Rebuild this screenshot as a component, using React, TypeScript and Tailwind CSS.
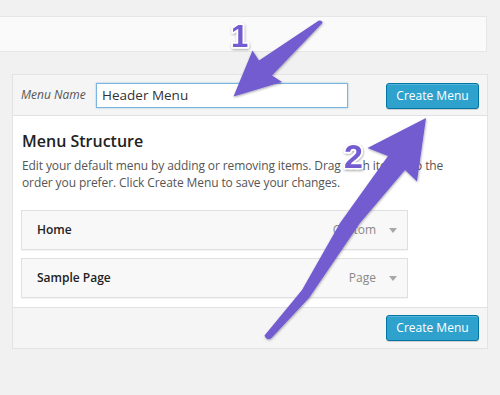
import React from "react";

function Arrows() {
  return (
    <svg
      className="absolute left-0 top-0 pointer-events-none"
      width={500}
      height={395}
      viewBox="0 0 500 395"
    >
      <defs>
        <filter id="sh" x="-20%" y="-20%" width="140%" height="140%">
          <feDropShadow dx="0.5" dy="1" stdDeviation="0.8" floodColor="#000" floodOpacity="0.35" />
        </filter>
      </defs>
      <g fill="#725bd0" filter="url(#sh)">
        <path d="M318.5,20.8 Q321.5,19.8 322.6,22.8 L272,75.5 L282,82 L233.5,96.5 L252.5,50.5 L259,60.5 Z" />
        <path d="M264.5,335.5 L302,290 L340,223 L388,156 L367.5,148 L426,118 L417,181.5 L405,170 L360,223 L309,298 L271.5,338 Q267,341.5 264.5,335.5 Z" />
      </g>
      <g
        fontFamily="'Liberation Sans', Arial, sans-serif"
        fontWeight="700"
        fill="#725bd0"
        stroke="#ffffff"
        strokeWidth="3.5"
        strokeLinejoin="round"
        paintOrder="stroke"
        textAnchor="middle"
        filter="url(#sh)"
      >
        <text x="239.5" y="46.5" fontSize="31">1</text>
        <text x="353.5" y="167.5" fontSize="34">2</text>
      </g>
    </svg>
  );
}

function Button() {
  return (
    <button className="w-[93px] h-[26px] rounded-[3px] bg-[#2ea2cc] border border-[#0074a2] text-white text-[12px] leading-none shadow-[inset_0_1px_0_rgba(120,200,230,0.5),0_1px_0_rgba(0,0,0,0.15)]">
      Create Menu
    </button>
  );
}

function Item({ title, type }: { title: string; type: string }) {
  return (
    <div className="w-[387px] h-[40px] border border-[#dfdfdf] bg-[#f8f8f8] flex items-center pl-[15px] pr-[10px] shadow-[0_1px_1px_rgba(0,0,0,0.04)]">
      <span className="text-[12px] font-semibold text-[#222]">{title}</span>
      <span className="ml-auto text-[12px] text-[#888]">{type}</span>
      <span className="ml-[13px] w-0 h-0 border-l-[4px] border-r-[4px] border-t-[5px] border-l-transparent border-r-transparent border-t-[#a8a8a8]" />
    </div>
  );
}

export default function App() {
  return (
    <div className="relative w-[500px] h-[395px] overflow-hidden bg-[#f1f1f1] font-['Open_Sans',sans-serif]">
      <div className="mt-4 h-9 w-[487px] bg-[#fafafa] border border-l-0 border-[#e6e6e6]" />
      <div className="mt-[22px] ml-3 w-[476px] border border-[#e3e3e3] bg-white">
        <div className="h-[41px] bg-[#f5f5f5] border-b border-[#e1e1e1] flex items-center pl-2 pr-2">
          <span className="w-[75px] text-[12px] italic text-[#555]">Menu Name</span>
          <div className="w-[252px] h-[25px] bg-white border border-[#7db3df] shadow-[0_0_2px_rgba(30,140,190,0.4)] flex items-center pl-[5px] text-[13.5px] text-[#333]">
            Header Menu
          </div>
          <div className="ml-auto">
            <Button />
          </div>
        </div>
        <div className="pl-2 pt-[13px] pb-[9px]">
          <h3 className="text-[16px] leading-[24px] font-semibold text-[#222] pl-px">Menu Structure</h3>
          <p className="mt-1 w-[434px] text-[12px] leading-[17px] tracking-[-0.1px] text-[#555] pl-px">
            Edit your default menu by adding or removing items. Drag each item into the order you prefer. Click Create Menu to save your changes.
          </p>
          <div className="mt-[19px] flex flex-col gap-2">
            <Item title="Home" type="Custom" />
            <Item title="Sample Page" type="Page" />
          </div>
        </div>
        <div className="h-[41px] bg-[#f5f5f5] border-t border-[#e1e1e1] flex items-center justify-end pr-2">
          <Button />
        </div>
      </div>
      <Arrows />
    </div>
  );
}
